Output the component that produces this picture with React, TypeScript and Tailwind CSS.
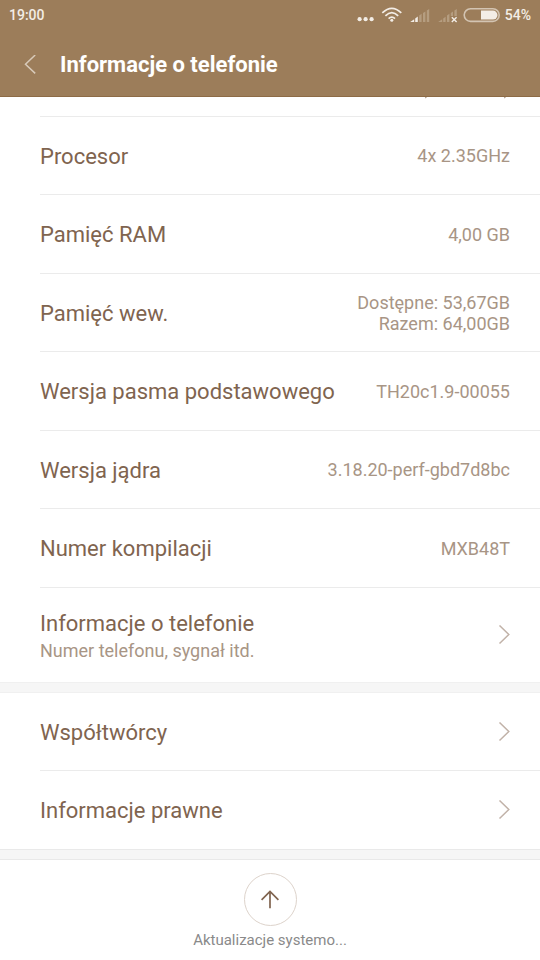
import React from "react";

const specs = [
  { label: "Procesor", value: ["4x 2.35GHz"] },
  { label: "Pamięć RAM", value: ["4,00 GB"] },
  { label: "Pamięć wew.", value: ["Dostępne: 53,67GB", "Razem: 64,00GB"] },
  { label: "Wersja pasma podstawowego", value: ["TH20c1.9-00055"] },
  { label: "Wersja jądra", value: ["3.18.20-perf-gbd7d8bc"] },
  { label: "Numer kompilacji", value: ["MXB48T"] },
];

const ChevronRight = () => (
  <svg className="w-3 h-5 shrink-0" viewBox="0 0 12 20" fill="none" stroke="#c1b2a8" strokeWidth="1.5">
    <path d="M1.5 0.5 L10.8 9.5 L1.5 18.5" />
  </svg>
);

const StatusIcons = () => (
  <svg className="w-36 h-5" viewBox="0 0 144 20" fill="none">
    {/* More dots */}
    <g fill="#f3ede6">
      <circle cx="2.6" cy="14.2" r="2.1" />
      <circle cx="8.6" cy="14.2" r="2.1" />
      <circle cx="14.6" cy="14.2" r="2.1" />
    </g>
    {/* Wifi */}
    <g stroke="#f3ede6" strokeWidth="1.7">
      <path d="M25.3 7.8 Q34.8 -1.2 44.3 7.8" />
      <path d="M28.4 10.8 Q34.8 4.4 41.2 10.8" />
      <path d="M31.6 13.6 Q34.8 10.6 38 13.6" />
    </g>
    <circle cx="34.8" cy="15.2" r="1.5" fill="#f3ede6" />
    {/* First SIM */}
    <path d="M53.2 17 L57.2 14.2 V17Z M58.2 13.6 L60.8 11.6 V17 H58.2Z" fill="#f3ede6" />
    <path d="M62.2 10.6 L64.6 8.8 V17 H62.2Z M66 8 L68.4 6.4 V17 H66Z M69.8 5.6 L72.2 4 V17 H69.8Z" fill="#b59d80" />
    {/* Second SIM, no signal */}
    <path d="M81.2 17 L85.2 14.2 V17Z M86.2 13.6 L88.6 11.8 V17 H86.2Z M90 10.6 L92.4 8.8 V17 H90Z M93.8 8 L96 6.4 V11 H93.8Z M97.4 5.6 L99.8 4 V11 H97.4Z" fill="#b59d80" />
    <path d="M94.8 12.2 L99.6 17 M99.6 12.2 L94.8 17" stroke="#f3ede6" strokeWidth="1.4" />
    {/* Battery */}
    <rect x="107.2" y="3.8" width="35" height="12.6" rx="6.3" stroke="#d3c4b2" strokeWidth="1.6" />
    <path d="M124 5.6 H136 A4.5 4.5 0 0 1 136 14.6 H124Z" fill="#f3ede6" />
  </svg>
);

const App = () => {
  return (
    <div className="min-h-screen flex flex-col bg-white font-['Roboto',sans-serif] text-[#80644f]">
      <header className="bg-[#9c7d5a] border-b border-[#8d6b46]">
        {/* Status bar */}
        <div className="h-[30px] flex items-center justify-between px-[9px] text-sm font-medium text-[#f3ede6]">
          <span>19:00</span>
          <div className="flex items-center gap-1">
            <StatusIcons />
            <span>54%</span>
          </div>
        </div>

        {/* Title bar */}
        <div className="h-[66px] flex items-center pt-1">
          <button type="button" aria-label="Wstecz" className="w-[60px] pl-6">
            <svg className="w-3 h-5" viewBox="0 0 12 20" fill="none" stroke="#d8cab9" strokeWidth="1.5">
              <path d="M11.2 0 L1.5 9.2 L11.2 18.4" />
            </svg>
          </button>
          <h1 className="text-[22px] leading-7 font-bold text-white">Informacje o telefonie</h1>
        </div>
      </header>

      <main className="grow">
        {/* Tail of the row that is scrolled under the header */}
        <div className="ml-10 h-5 pr-[34px] flex justify-end border-b border-[#ebebeb]">
          <svg className="w-[82px] h-0.5" viewBox="0 0 82 2" fill="#b7a698">
            <path d="M1 0 H3 L2 1.2 H1Z M80 0 H82 L81 1.2 H80Z" />
          </svg>
        </div>

        <dl className="ml-10">
          {specs.map((spec) => (
            <div
              key={spec.label}
              className="h-[78px] even:h-[79px] flex items-center justify-between pr-[30px] border-b border-[#ebebeb]"
            >
              <dt className="text-[22px] leading-7 pt-0.5">{spec.label}</dt>
              <dd className="text-lg leading-[21px] text-right text-[#a89585]">
                {spec.value.map((line) => (
                  <div key={line}>{line}</div>
                ))}
              </dd>
            </div>
          ))}
        </dl>

        <a href="#telefon" className="h-[94px] flex items-center justify-between pl-10 pr-[30px]">
          <span className="pt-1">
            <span className="block text-[22px] leading-7">Informacje o telefonie</span>
            <span className="block text-lg leading-[26px] text-[#a89585]">Numer telefonu, sygnał itd.</span>
          </span>
          <ChevronRight />
        </a>

        <div className="h-[11px] bg-[#f6f6f6] border-y border-[#f0f0f0]" />

        <nav>
          <a href="#wspoltworcy" className="ml-10 h-[78px] flex items-center justify-between pr-[30px] border-b border-[#ebebeb]">
            <span className="text-[22px] leading-7 pt-0.5">Współtwórcy</span>
            <ChevronRight />
          </a>
          <a href="#prawne" className="ml-10 h-[78px] flex items-center justify-between pr-[30px]">
            <span className="text-[22px] leading-7 pt-0.5">Informacje prawne</span>
            <ChevronRight />
          </a>
        </nav>

        <div className="h-[11px] bg-[#f6f6f6] border-y border-[#e9e9e9]" />
      </main>

      <footer className="flex justify-center pt-3 pb-2.5">
        <button type="button" className="flex flex-col items-center gap-1">
          <span className="size-[53px] flex items-center justify-center rounded-full border border-[#ddd3cb]">
            <svg className="size-5" viewBox="0 0 20 20" fill="none" stroke="#80644f" strokeWidth="1.7">
              <path d="M10 18.2 V1.4 M1.6 9.8 L10 1.4 L18.4 9.8" />
            </svg>
          </span>
          <span className="text-[15px] leading-5 text-[#8a8a8a]">Aktualizacje systemo...</span>
        </button>
      </footer>
    </div>
  );
};

export default App;
